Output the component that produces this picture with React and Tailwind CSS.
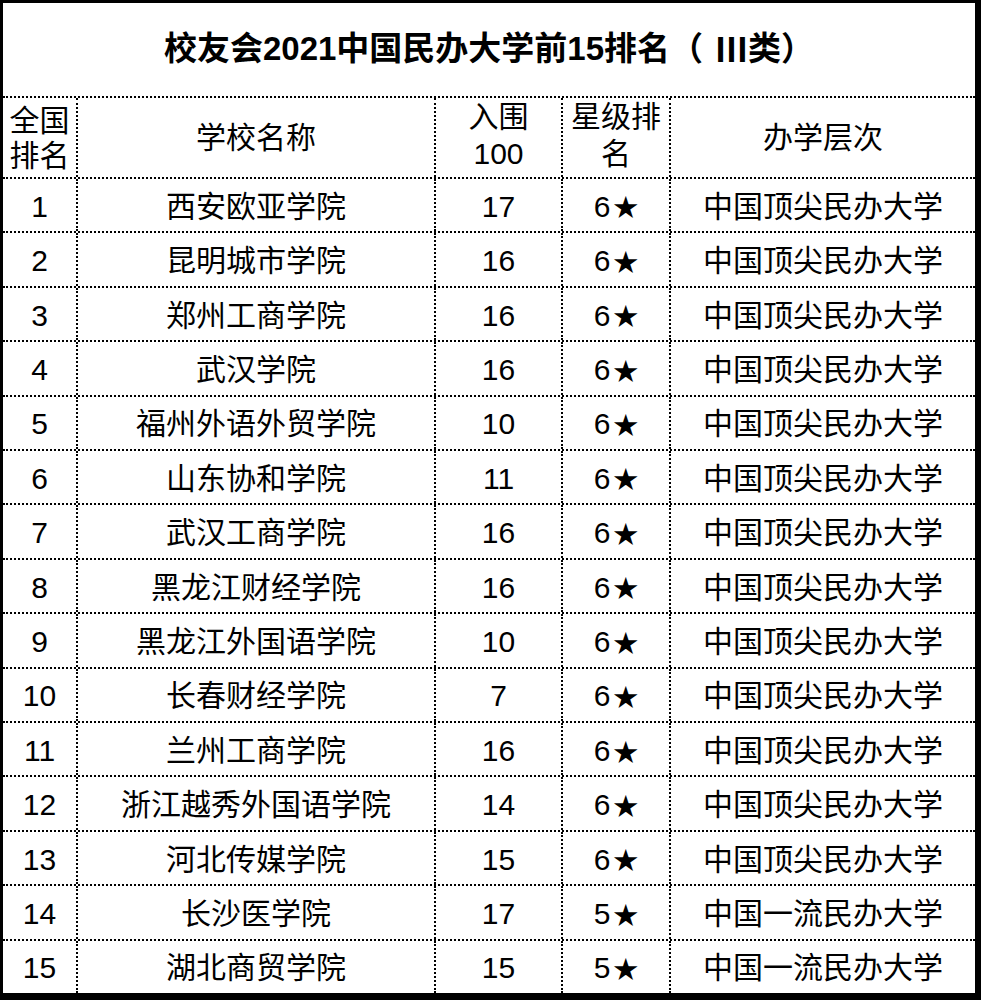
const rows = [
  [1, '西安欧亚学院', 17, 6, '中国顶尖民办大学'],
  [2, '昆明城市学院', 16, 6, '中国顶尖民办大学'],
  [3, '郑州工商学院', 16, 6, '中国顶尖民办大学'],
  [4, '武汉学院', 16, 6, '中国顶尖民办大学'],
  [5, '福州外语外贸学院', 10, 6, '中国顶尖民办大学'],
  [6, '山东协和学院', 11, 6, '中国顶尖民办大学'],
  [7, '武汉工商学院', 16, 6, '中国顶尖民办大学'],
  [8, '黑龙江财经学院', 16, 6, '中国顶尖民办大学'],
  [9, '黑龙江外国语学院', 10, 6, '中国顶尖民办大学'],
  [10, '长春财经学院', 7, 6, '中国顶尖民办大学'],
  [11, '兰州工商学院', 16, 6, '中国顶尖民办大学'],
  [12, '浙江越秀外国语学院', 14, 6, '中国顶尖民办大学'],
  [13, '河北传媒学院', 15, 6, '中国顶尖民办大学'],
  [14, '长沙医学院', 17, 5, '中国一流民办大学'],
  [15, '湖北商贸学院', 15, 5, '中国一流民办大学'],
];

const cols = 'grid grid-cols-[73px_358px_127px_108px_1fr]';
const cell = 'flex items-center justify-center border-l-2 border-dotted border-black';

export default function App() {
  return (
    <div className="w-[981px] h-[1000px] bg-white border-l-[3px] border-t-[3px] border-r-[6px] border-b-[7px] border-black flex flex-col text-black text-[30px] font-['Liberation_Sans','Noto_Sans_CJK_SC',sans-serif]">
      <div className="h-[93px] flex items-center justify-center font-semibold text-[33px] pb-[2px]">
        校友会2021中国民办大学前15排名（
        <span className="ml-[12px] font-['Noto_Sans_CJK_SC',sans-serif]">Ⅲ</span>类）
      </div>

      <div className={`${cols} h-[81px] border-t-2 border-dotted border-black`}>
        <div className="flex flex-col items-center justify-center leading-[35px]">
          <span>全国</span>
          <span>排名</span>
        </div>
        <div className={cell}>学校名称</div>
        <div className="border-l-2 border-dotted border-black flex flex-col items-center leading-[37px]">
          <span>入围</span>
          <span>100</span>
        </div>
        <div className="border-l-2 border-dotted border-black flex flex-col items-center leading-[37px]">
          <span>星级排</span>
          <span>名</span>
        </div>
        <div className={cell}>办学层次</div>
      </div>

      {rows.map(([rank, name, count, star, level]) => (
        <div key={rank} className={`${cols} flex-1 border-t-2 border-dotted border-black`}>
          <div className="flex items-center justify-center pt-[2px]">{rank}</div>
          <div className={`${cell} pt-[2px]`}>{name}</div>
          <div className={`${cell} pt-[2px]`}>{count}</div>
          <div className={`${cell} pt-[2px]`}>
            {star}
            <span className="font-['Noto_Sans_CJK_SC',sans-serif] text-[25px] ml-[3px]">★</span>
          </div>
          <div className={`${cell} pt-[2px]`}>{level}</div>
        </div>
      ))}
    </div>
  );
}
